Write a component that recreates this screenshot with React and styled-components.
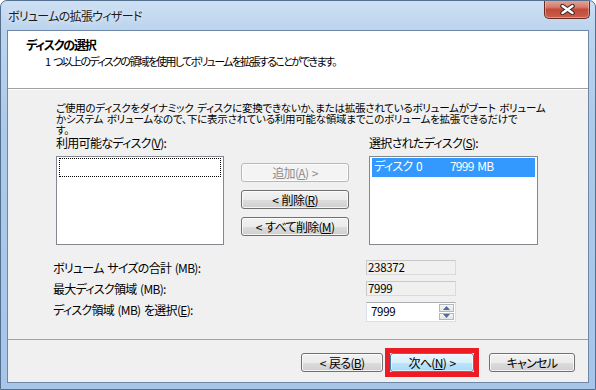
import styled, { createGlobalStyle } from 'styled-components'

const GlobalStyle = createGlobalStyle`
  html, body {
    margin: 0;
    padding: 0;
    background: #ffffff;
  }
  body {
    font-family: "Noto Sans CJK JP", "Noto Sans", sans-serif;
    font-size: 12px;
    letter-spacing: -0.7px;
    word-spacing: 1.5px;
    color: #000000;
    font-feature-settings: "palt";
  }
  * {
    box-sizing: border-box;
  }
`

const Window = styled.div`
  width: 596px;
  height: 390px;
  display: flex;
  flex-direction: column;
  padding: 0 6px 6px 6px;
  background: linear-gradient(to bottom, #cddff3 0px, #bcd4ee 29px, #aecaea 120px, #a6c5e9 100%);
  border: 1px solid #55708f;
  border-radius: 7px 7px 0 0;
  overflow: hidden;
`

const TitleBar = styled.div`
  height: 29px;
  flex: none;
  display: flex;
  justify-content: space-between;
  padding-left: 1px;
`

const Caption = styled.div`
  font-size: 12px;
  line-height: 29px;
  color: #1b1b1b;
  text-shadow: 0 0 6px rgba(255, 255, 255, 0.9);
`

const CloseButton = styled.div`
  width: 46px;
  height: 19px;
  margin-top: -1px;
  margin-right: -1px;
  display: flex;
  align-items: center;
  justify-content: center;
  border: 1px solid #6a2a22;
  border-top: none;
  border-radius: 0 0 5px 5px;
  background: linear-gradient(to bottom, #e4a89d 0%, #d57b6c 40%, #c24a38 52%, #c9604d 100%);
  box-shadow: inset 0 0 0 1px rgba(255, 210, 200, 0.45);
`

const Client = styled.div`
  flex: 1;
  display: flex;
  flex-direction: column;
  border: 1px solid #6f87a6;
  background: #f0f0f0;
`

const Header = styled.div`
  height: 58px;
  flex: none;
  padding: 6px 0 0 18px;
  background: #ffffff;
  border-bottom: 1px solid #a0a0a0;
`

const HeaderTitle = styled.div`
  font-weight: bold;
  line-height: 15px;
  letter-spacing: -1.2px;
`

const HeaderSubtitle = styled.div`
  margin-top: 2px;
  padding-left: 19px;
  font-size: 11px;
  letter-spacing: -1.7px;
  word-spacing: 3px;
  line-height: 15px;
`

const Body = styled.div`
  flex: 1;
  display: flex;
  flex-direction: column;
  padding: 12px 0 0 48px;
  border-top: 1px solid #ffffff;
`

const Intro = styled.div`
  font-size: 10.5px;
  letter-spacing: -0.25px;
`

const IntroLine = styled.div`
  height: 11px;
  line-height: 11px;
  white-space: nowrap;
`

const ListsRow = styled.div`
  display: flex;
  margin-top: 1px;
`

const ListColumn = styled.div`
  display: flex;
  flex-direction: column;
  width: ${props => props.width}px;
`

const Label = styled.div`
  line-height: 14px;
  white-space: nowrap;
`

const ListBox = styled.div`
  height: 89px;
  margin-top: 6px;
  padding: 1px 2px;
  background: #ffffff;
  border: 1px solid #828790;
`

const ListItem = styled.div`
  height: 19px;
  display: flex;
  padding-left: 1px;
  line-height: 13px;
  color: ${props => (props.selected ? '#ffffff' : '#000000')};
  background: ${props => (props.selected ? '#3399ff' : 'transparent')};
  border: 1px dotted ${props => (props.focused ? '#000000' : 'transparent')};
`

const ItemSize = styled.span`
  margin-left: 28px;
`

const MoveButtons = styled.div`
  display: flex;
  flex-direction: column;
  gap: 8px;
  width: 108px;
  margin: 0 20px 0 17px;
  padding-top: 27px;
`

const Button = styled.div`
  width: ${props => props.width || 108}px;
  height: 19px;
  display: flex;
  align-items: center;
  justify-content: center;
  line-height: 17px;
  white-space: nowrap;
  color: ${props => (props.disabled ? '#8d8d8d' : '#000000')};
  border: 1px solid ${props => (props.disabled ? '#b5b9bc' : props.primary ? '#3c7fb1' : '#707070')};
  border-radius: 3px;
  background: ${props =>
    props.disabled
      ? '#f4f4f4'
      : props.primary
        ? 'linear-gradient(to bottom, #eaf6fd 0%, #d9f0fc 50%, #bee6fd 51%, #a7d9f5 100%)'
        : 'linear-gradient(to bottom, #f2f2f2 0%, #ebebeb 50%, #dddddd 51%, #cfcfcf 100%)'};
  box-shadow: inset 0 0 0 1px ${props => (props.primary ? 'rgba(255,255,255,0.6)' : 'rgba(255,255,255,0.75)')};
`

const Highlight = styled.div`
  margin: -5px 0;
  border: 5px solid #ed1c24;
  display: flex;
`

const Key = styled.u`
  text-underline-offset: 1px;
`

const Fields = styled.div`
  display: grid;
  grid-template-columns: 313px 90px;
  grid-template-rows: 15px 15px 20px;
  row-gap: 6px;
  margin: 15px 0 0 -3px;
`

const FieldLabel = styled.div`
  line-height: 15px;
  white-space: nowrap;
`

const ReadOnlyField = styled.div`
  height: 15px;
  padding-left: 1px;
  font-size: 11.5px;
  letter-spacing: -0.3px;
  line-height: 13px;
  background: #f0f0f0;
  border: 1px solid #dadada;
  border-top-color: #c9c9c9;
  border-left-color: #c9c9c9;
`

const SpinBox = styled.div`
  height: 20px;
  display: flex;
  justify-content: space-between;
  background: #ffffff;
  border: 1px solid #dbdfe6;
  border-top-color: #abadb3;
`

const SpinValue = styled.div`
  padding: 1px 0 0 4px;
  font-size: 11.5px;
  letter-spacing: -0.3px;
  line-height: 15px;
`

const SpinButtons = styled.div`
  width: 16px;
  display: flex;
  flex-direction: column;
  gap: 1px;
  padding: 1px 1px 1px 0;
`

const SpinArrow = styled.div`
  flex: 1;
  display: flex;
  align-items: center;
  justify-content: center;
  border: 1px solid #b6b6b6;
  background: linear-gradient(to bottom, #f7f7f7, #e4e4e4);
`

const Footer = styled.div`
  height: 43px;
  flex: none;
  display: flex;
  align-items: flex-start;
  justify-content: flex-end;
  padding: 13px 13px 0 0;
  border-top: 1px solid #a0a0a0;
`

const FooterGap = styled.div`
  width: ${props => props.size}px;
`

const CloseGlyph = () => (
  <svg width="15" height="11" viewBox="0 0 15 11">
    <path d="M2.5 2 L12.5 9 M12.5 2 L2.5 9" stroke="#3b2420" strokeWidth="4.4" strokeLinecap="round" />
    <path d="M2.5 2 L12.5 9 M12.5 2 L2.5 9" stroke="#ffffff" strokeWidth="2.4" strokeLinecap="round" />
  </svg>
)

const Arrow = ({ up }) => (
  <svg width="7" height="4" viewBox="0 0 7 4">
    <path d={up ? 'M0 4 L3.5 0 L7 4 Z' : 'M0 0 L3.5 4 L7 0 Z'} fill="#4f6c9c" />
  </svg>
)

const App = () => {
  return (
    <>
      <GlobalStyle />
      <Window>
        <TitleBar>
          <Caption>ボリュームの拡張ウィザード</Caption>
          <CloseButton>
            <CloseGlyph />
          </CloseButton>
        </TitleBar>
        <Client>
          <Header>
            <HeaderTitle>ディスクの選択</HeaderTitle>
            <HeaderSubtitle>1 つ以上のディスクの領域を使用してボリュームを拡張することができます。</HeaderSubtitle>
          </Header>
          <Body>
            <Intro>
              <IntroLine>ご使用のディスクをダイナミック ディスクに変換できないか、または拡張されているボリュームがブート ボリューム</IntroLine>
              <IntroLine>かシステム ボリュームなので、下に表示されている利用可能な領域までこのボリュームを拡張できるだけで</IntroLine>
              <IntroLine>す。</IntroLine>
            </Intro>
            <ListsRow>
              <ListColumn width={168}>
                <Label>利用可能なディスク(<Key>V</Key>):</Label>
                <ListBox>
                  <ListItem focused />
                </ListBox>
              </ListColumn>
              <MoveButtons>
                <Button disabled>追加(<Key>A</Key>) &gt;</Button>
                <Button>&lt; 削除(<Key>R</Key>)</Button>
                <Button>&lt; すべて削除(<Key>M</Key>)</Button>
              </MoveButtons>
              <ListColumn width={169}>
                <Label>選択されたディスク(<Key>S</Key>):</Label>
                <ListBox>
                  <ListItem selected>
                    ディスク 0<ItemSize>7999 MB</ItemSize>
                  </ListItem>
                </ListBox>
              </ListColumn>
            </ListsRow>
            <Fields>
              <FieldLabel>ボリューム サイズの合計 (MB):</FieldLabel>
              <ReadOnlyField>238372</ReadOnlyField>
              <FieldLabel>最大ディスク領域 (MB):</FieldLabel>
              <ReadOnlyField>7999</ReadOnlyField>
              <FieldLabel>ディスク領域 (MB) を選択(<Key>E</Key>):</FieldLabel>
              <SpinBox>
                <SpinValue>7999</SpinValue>
                <SpinButtons>
                  <SpinArrow><Arrow up /></SpinArrow>
                  <SpinArrow><Arrow /></SpinArrow>
                </SpinButtons>
              </SpinBox>
            </Fields>
          </Body>
          <Footer>
            <Button width={82}>&lt; 戻る(<Key>B</Key>)</Button>
            <FooterGap size={2} />
            <Highlight>
              <Button width={84} primary>次へ(<Key>N</Key>) &gt;</Button>
            </Highlight>
            <FooterGap size={10} />
            <Button width={86}>キャンセル</Button>
          </Footer>
        </Client>
      </Window>
    </>
  )
}

export default App
